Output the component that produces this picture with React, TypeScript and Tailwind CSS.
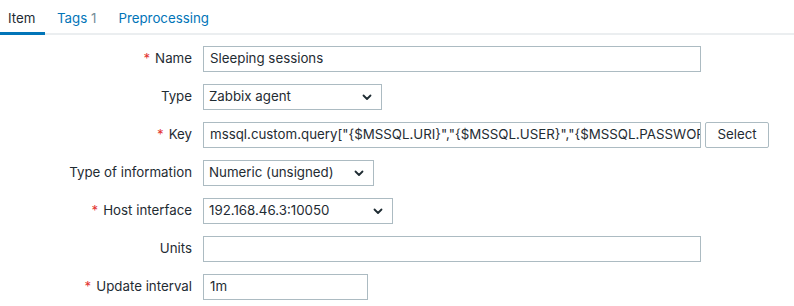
import React from "react";

const font = { fontFamily: "Inter, 'Noto Sans', sans-serif" };

function Chevron() {
  return (
    <svg width="10" height="7" viewBox="0 0 10 7" className="shrink-0">
      <path d="M1.5 1.5 L5 5 L8.5 1.5" fill="none" stroke="#1f2c33" strokeWidth="1.8" strokeLinecap="round" strokeLinejoin="round" />
    </svg>
  );
}

function Label({ text, required }: { text: string; required?: boolean }) {
  return (
    <div className="w-[192px] shrink-0 text-right text-[13.3px] text-[#1f2c33]">
      {required && <span className="text-[#e33734] mr-[5px]">*</span>}
      {text}
    </div>
  );
}

function TextBox({ value, width }: { value: string; width: string }) {
  return (
    <div
      className={`${width} h-[26px] border border-[#acbbc2] bg-white px-[6px] flex items-center text-[13.3px] text-[#1f2c33] overflow-hidden whitespace-nowrap`}
    >
      {value}
    </div>
  );
}

function SelectBox({ value, width }: { value: string; width: string }) {
  return (
    <div
      className={`${width} h-[26px] border border-[#acbbc2] bg-white pl-[5px] pr-[9px] flex items-center justify-between text-[13.3px] text-[#1f2c33]`}
    >
      <span>{value}</span>
      <Chevron />
    </div>
  );
}

export default function App() {
  return (
    <div className="w-[794px] h-[306px] bg-white overflow-hidden" style={font}>
      <div className="flex h-[35px] border-b-2 border-[#ebeef0] text-[13.3px]">
        <div className="px-[8px] pt-[9px] text-[#1f2c33] border-b-[3px] border-[#0275b8] -mb-[2px] w-[45px]">
          Item
        </div>
        <div className="pl-[12px] pr-[12px] pt-[9px] text-[#0275b8]">
          Tags <span className="text-[#768d99]">1</span>
        </div>
        <div className="pl-[10px] pt-[9px] text-[#0275b8]">Preprocessing</div>
      </div>
      <div className="flex flex-col gap-[12px] pt-[11px]">
        <div className="flex items-center gap-[11px]">
          <Label text="Name" required />
          <TextBox value="Sleeping sessions" width="w-[498px]" />
        </div>
        <div className="flex items-center gap-[11px]">
          <Label text="Type" />
          <SelectBox value="Zabbix agent" width="w-[179px]" />
        </div>
        <div className="flex items-center gap-[11px]">
          <Label text="Key" required />
          <div className="flex items-center gap-[4px]">
            <TextBox
              value={'mssql.custom.query["{$MSSQL.URI}","{$MSSQL.USER}","{$MSSQL.PASSWORD}"]'}
              width="w-[498px]"
            />
            <button className="h-[26px] w-[64px] border border-[#acbbc2] rounded-[2px] bg-white text-[13.3px] text-[#1f2c33]">
              Select
            </button>
          </div>
        </div>
        <div className="flex items-center gap-[11px]">
          <Label text="Type of information" />
          <SelectBox value="Numeric (unsigned)" width="w-[171px]" />
        </div>
        <div className="flex items-center gap-[11px]">
          <Label text="Host interface" required />
          <SelectBox value="192.168.46.3:10050" width="w-[190px]" />
        </div>
        <div className="flex items-center gap-[11px]">
          <Label text="Units" />
          <TextBox value="" width="w-[498px]" />
        </div>
        <div className="flex items-center gap-[11px]">
          <Label text="Update interval" required />
          <TextBox value="1m" width="w-[165px]" />
        </div>
      </div>
    </div>
  );
}
